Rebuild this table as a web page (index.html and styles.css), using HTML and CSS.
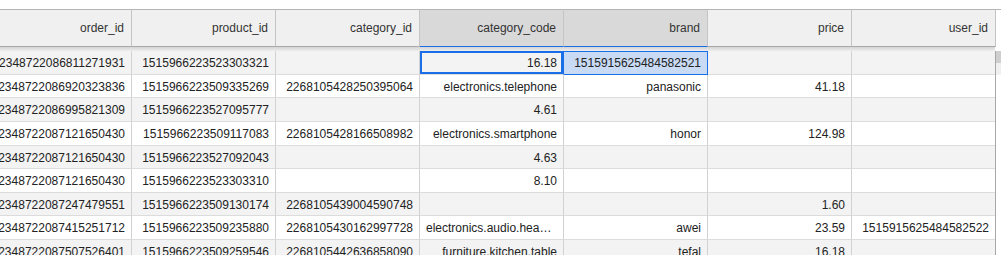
FILE: index.html
```html
<!DOCTYPE html>
<html>
<head>
<meta charset="utf-8">
<link rel="stylesheet" href="styles.css">
</head>
<body>
<div class="sheet">
  <div class="table">
    <div class="row head">
      <div class="hcell">order_id</div>
      <div class="hcell">product_id</div>
      <div class="hcell">category_id</div>
      <div class="hcell sel">category_code</div>
      <div class="hcell sel">brand</div>
      <div class="hcell">price</div>
      <div class="hcell">user_id</div>
      <div class="hcell edge"></div>
    </div>
    <div class="shadow"></div>
    <div class="row odd">
      <div class="cell">2348722086811271931</div>
      <div class="cell">1515966223523303321</div>
      <div class="cell"></div>
      <div class="cell active">16.18</div>
      <div class="cell range">1515915625484582521</div>
      <div class="cell"></div>
      <div class="cell"></div>
      <div class="cell edge thumb"></div>
    </div>
    <div class="row">
      <div class="cell">2348722086920323836</div>
      <div class="cell">1515966223509335269</div>
      <div class="cell">2268105428250395064</div>
      <div class="cell">electronics.telephone</div>
      <div class="cell">panasonic</div>
      <div class="cell">41.18</div>
      <div class="cell"></div>
      <div class="cell edge"></div>
    </div>
    <div class="row odd">
      <div class="cell">2348722086995821309</div>
      <div class="cell">1515966223527095777</div>
      <div class="cell"></div>
      <div class="cell">4.61</div>
      <div class="cell"></div>
      <div class="cell"></div>
      <div class="cell"></div>
      <div class="cell edge"></div>
    </div>
    <div class="row">
      <div class="cell">2348722087121650430</div>
      <div class="cell">1515966223509117083</div>
      <div class="cell">2268105428166508982</div>
      <div class="cell">electronics.smartphone</div>
      <div class="cell">honor</div>
      <div class="cell">124.98</div>
      <div class="cell"></div>
      <div class="cell edge"></div>
    </div>
    <div class="row odd">
      <div class="cell">2348722087121650430</div>
      <div class="cell">1515966223527092043</div>
      <div class="cell"></div>
      <div class="cell">4.63</div>
      <div class="cell"></div>
      <div class="cell"></div>
      <div class="cell"></div>
      <div class="cell edge"></div>
    </div>
    <div class="row">
      <div class="cell">2348722087121650430</div>
      <div class="cell">1515966223523303310</div>
      <div class="cell"></div>
      <div class="cell">8.10</div>
      <div class="cell"></div>
      <div class="cell"></div>
      <div class="cell"></div>
      <div class="cell edge"></div>
    </div>
    <div class="row odd">
      <div class="cell">2348722087247479551</div>
      <div class="cell">1515966223509130174</div>
      <div class="cell">2268105439004590748</div>
      <div class="cell"></div>
      <div class="cell"></div>
      <div class="cell">1.60</div>
      <div class="cell"></div>
      <div class="cell edge"></div>
    </div>
    <div class="row">
      <div class="cell">2348722087415251712</div>
      <div class="cell">1515966223509235880</div>
      <div class="cell">2268105430162997728</div>
      <div class="cell">electronics.audio.headphone</div>
      <div class="cell">awei</div>
      <div class="cell">23.59</div>
      <div class="cell">1515915625484582522</div>
      <div class="cell edge"></div>
    </div>
    <div class="row odd">
      <div class="cell">2348722087507526401</div>
      <div class="cell">1515966223509259546</div>
      <div class="cell">2268105442636858090</div>
      <div class="cell">furniture.kitchen.table</div>
      <div class="cell">tefal</div>
      <div class="cell">16.18</div>
      <div class="cell"></div>
      <div class="cell edge"></div>
    </div>
  </div>
</div>
</body>
</html>
```

FILE: styles.css
```css
html, body {
  margin: 0;
  padding: 0;
  background: #ffffff;
}

body {
  font-family: "Liberation Sans", Arial, sans-serif;
  font-size: 12px;
  color: #222222;
}

.sheet {
  width: 1001px;
  height: 255px;
  overflow: hidden;
  padding-top: 9px;
  box-sizing: border-box;
}

.table {
  margin-left: -12px;
  width: 1030px;
}

.row {
  display: flex;
  height: 23.625px;
}

.row.odd {
  background: #f3f3f3;
}

.row.head {
  height: 38px;
}

.hcell,
.cell {
  flex: 0 0 144px;
  box-sizing: border-box;
  text-align: right;
  padding-right: 6px;
  padding-left: 6px;
  white-space: nowrap;
  overflow: hidden;
  text-overflow: ellipsis;
}

.hcell {
  background: #f0f0f0;
  border-top: 1px solid #b4b4b4;
  border-bottom: 1px solid #a9a9a9;
  border-right: 1px solid #c4c4c4;
  color: #333333;
  padding-right: 7px;
  line-height: 36px;
}

.hcell.sel {
  background: #d9d9d9;
  border-bottom-color: #1a6fe8;
}

.hcell.edge {
  flex: 0 0 20px;
  background: #ffffff;
  border-right: none;
  border-bottom: none;
}

.shadow {
  height: 4px;
  background: linear-gradient(#d4d4d4, #eeeeee);
  width: 1007px;
}

.cell {
  border-right: 1px solid #d2d2d2;
  border-bottom: 1px solid #dcdcdc;
  line-height: 21px;
  padding-top: 2px;
}

.cell.edge {
  flex: 0 0 20px;
  border-right: none;
  border-left: 1px solid #a8a8a8;
  margin-left: -1px;
  background: #ffffff;
  border-bottom: none;
}

.cell.edge.thumb {
  background: linear-gradient(#cfcfcf 0, #cfcfcf 12px, #f0f0f0 12px);
}

.cell.active {
  box-shadow: inset 0 0 0 2px #1a6fe8;
  border-right-color: #1a6fe8;
}

.cell.range {
  background: #c8daf4;
  box-shadow: inset 0 1px 0 #1a6fe8;
  border-right-color: #1a6fe8;
  border-bottom-color: #1a6fe8;
}
```
